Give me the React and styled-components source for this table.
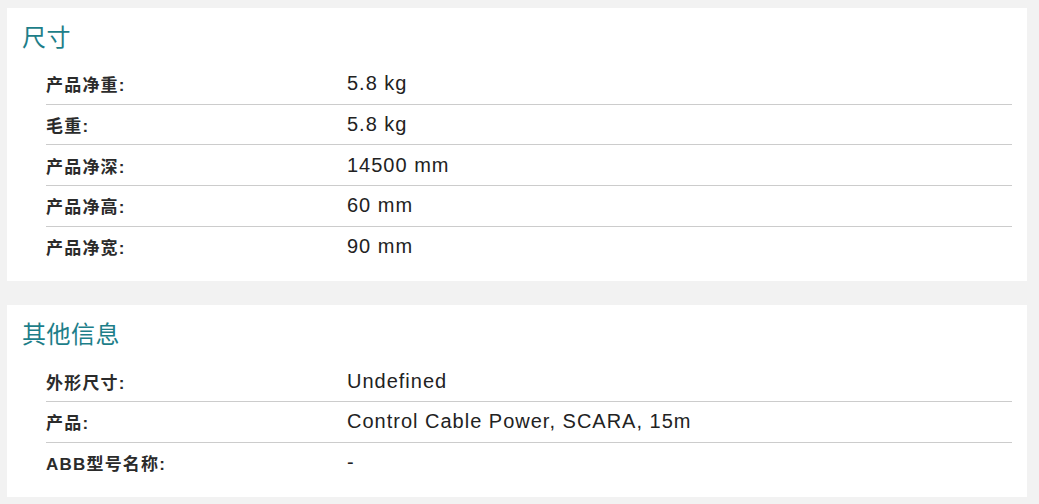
import React from 'react';
import styled, { createGlobalStyle } from 'styled-components';

const GlobalStyle = createGlobalStyle`
  html, body {
    margin: 0;
    padding: 0;
    background: #f2f2f2;
  }
  body {
    font-family: "Liberation Sans", Arial, "Noto Sans CJK SC", sans-serif;
    color: #222;
  }
`

const Page = styled.div`
  display: flex;
  flex-direction: column;
  gap: 24px;
  padding: 8px 12px 8px 7px;
`

const Card = styled.section`
  background: #fff;
  padding: 15px;
`

const Title = styled.h2`
  margin: 0 0 11px 0;
  font-size: 24px;
  line-height: 30px;
  font-weight: 400;
  color: #1d7e89;
  letter-spacing: 0.5px;
`

const Rows = styled.div`
  display: flex;
  flex-direction: column;
  padding-left: 24px;
`

const Row = styled.div`
  display: grid;
  grid-template-columns: 301px 1fr;
  align-items: center;
  height: 39.67px;
  border-top: ${p => (p.first ? 'none' : '1px solid #cccccc')};
`

const Label = styled.div`
  font-size: 17px;
  font-weight: 700;
  color: #2b2b2b;
  letter-spacing: 1.2px;
`

const Value = styled.div`
  font-size: 20px;
  color: #222;
  letter-spacing: 1px;
`

const sections = [
  {
    title: '尺寸',
    rows: [
      ['产品净重:', '5.8 kg'],
      ['毛重:', '5.8 kg'],
      ['产品净深:', '14500 mm'],
      ['产品净高:', '60 mm'],
      ['产品净宽:', '90 mm'],
    ],
  },
  {
    title: '其他信息',
    rows: [
      ['外形尺寸:', 'Undefined'],
      ['产品:', 'Control Cable Power, SCARA, 15m'],
      ['ABB型号名称:', '-'],
    ],
  },
];

export default function App() {
  return (
    <>
      <GlobalStyle />
      <Page>
        {sections.map(s => (
          <Card key={s.title}>
            <Title>{s.title}</Title>
            <Rows>
              {s.rows.map(([k, v], i) => (
                <Row key={k} first={i === 0}>
                  <Label>{k}</Label>
                  <Value>{v}</Value>
                </Row>
              ))}
            </Rows>
          </Card>
        ))}
      </Page>
    </>
  );
}
